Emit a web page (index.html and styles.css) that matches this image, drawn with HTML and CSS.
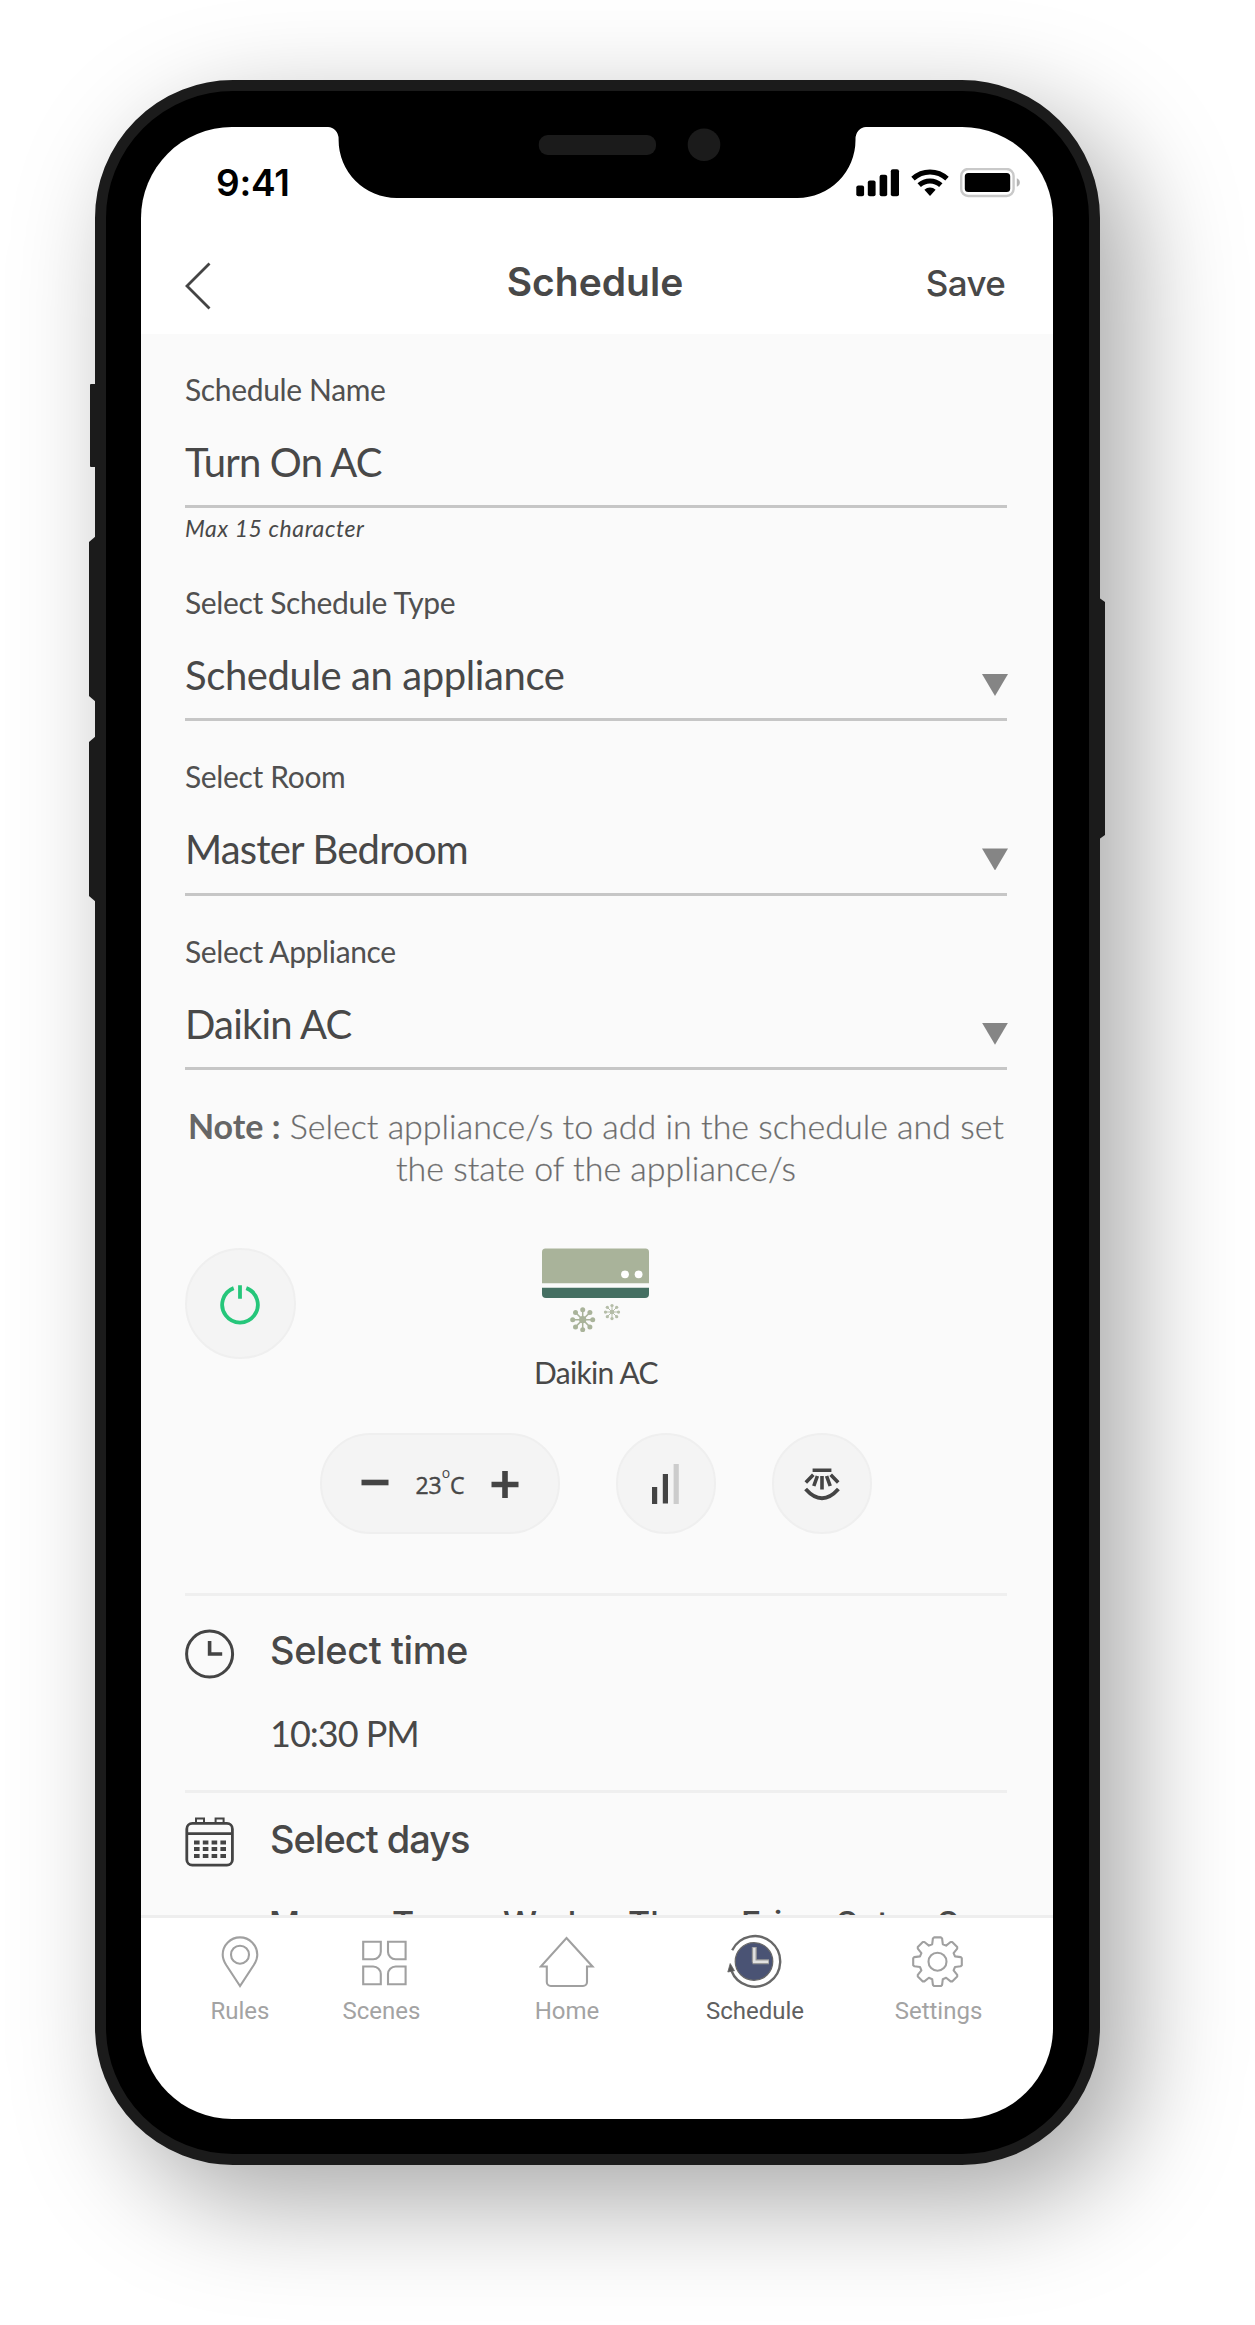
FILE: index.html
```html
<!DOCTYPE html>
<html lang="en">
<head>
<meta charset="utf-8">
<title>Schedule</title>
<link rel="stylesheet" href="styles.css">
</head>
<body>
<div class="phone">
  <span class="side-button side-button--mute"></span>
  <span class="side-button side-button--up"></span>
  <span class="side-button side-button--down"></span>
  <span class="side-button side-button--power"></span>

  <div class="screen">
    <svg class="notch" width="538" height="71" viewBox="0 0 538 71">
      <path d="M0 0A10.6 12 0 0 1 10.6 12V13A58 58 0 0 0 68.6 71H469.5A58 58 0 0 0 527.5 13V12A10.6 12 0 0 1 538 0Z" fill="#000"/>
      <rect x="210.8" y="8" width="117.2" height="20" rx="9" fill="#1b1b1b"/>
      <circle cx="376" cy="17.7" r="16.3" fill="#1b1b1b"/>
    </svg>

    <div class="status">
      <span class="status-time">9:41</span>
      <svg width="164" height="30" viewBox="0 0 164 30">
        <rect x="0.3" y="17.5" width="7.8" height="10.8" rx="2"/>
        <rect x="11.8" y="12.5" width="7.8" height="15.8" rx="2"/>
        <rect x="23.6" y="6.8" width="7.6" height="21.5" rx="2"/>
        <rect x="34.8" y="1.3" width="8.2" height="27" rx="2"/>
        <g fill="none" stroke="#000" stroke-width="5">
          <path d="M57 10.6a25 25 0 0 1 34 0"/>
          <path d="M63.2 17.2a16 16 0 0 1 21.6 0"/>
        </g>
        <path d="M74 28l-5.6-6.3a8.4 8.4 0 0 1 11.2 0z"/>
        <rect x="105.2" y="1" width="52.4" height="27" rx="7" fill="none" stroke="#c9c9c9" stroke-width="2.4"/>
        <rect x="108.8" y="5" width="45.4" height="19" rx="3.5"/>
        <path d="M160.8 10.3q3 1.2 3 4.2t-3 4.2z" fill="#b5b5b5"/>
      </svg>
    </div>

    <header class="nav">
      <svg class="nav-back" width="26" height="48" viewBox="0 0 26 48"><path d="M24.5 1.5 2 24 24.5 46.5" fill="none" stroke="#444" stroke-width="2.8"/></svg>
      <h1 class="nav-title">Schedule</h1>
      <span class="nav-save">Save</span>
    </header>

    <main class="content">
      <section class="field">
        <span class="label">Schedule Name</span>
        <div class="value">Turn On AC</div>
      </section>
      <p class="hint">Max 15 character</p>

      <section class="field">
        <span class="label">Select Schedule Type</span>
        <div class="value value--long">Schedule an appliance<i class="caret"></i></div>
      </section>
      <section class="field">
        <span class="label">Select Room</span>
        <div class="value">Master Bedroom<i class="caret"></i></div>
      </section>
      <section class="field">
        <span class="label">Select Appliance</span>
        <div class="value">Daikin AC<i class="caret"></i></div>
      </section>

      <p class="note"><b>Note :</b> Select appliance/s to add in the schedule and set the state of the appliance/s</p>

      <section class="device">
        <div class="round round--power">
          <svg width="42" height="42" viewBox="0 0 42 42" fill="none" stroke="#25c67a" stroke-width="3.8"><path d="M14.7 5.1a17.8 17.8 0 1 0 12.6 0M21 2.2v13.6"/></svg>
        </div>
        <div class="device-body">
          <svg width="107" height="84" viewBox="0 0 107 84">
            <path d="M0 35.2V4a3.5 3.5 0 0 1 3.5-3.5h100A3.5 3.5 0 0 1 107 4v31.2z" fill="#a9b39a"/>
            <path d="M0 39.8h107V46a4 4 0 0 1-4 4H4a4 4 0 0 1-4-4z" fill="#456f62"/>
            <circle cx="83" cy="26.3" r="3.9" fill="#fff"/><circle cx="96.6" cy="26.3" r="3.9" fill="#fff"/>
            <defs>
              <g id="flake">
                <circle r="3.6"/>
                <path d="M0-10V10M-10 0H10M-7.2-7.2 7.2 7.2M-7.2 7.2 7.2-7.2" stroke="#a9b39a" stroke-width="1.5"/>
                <circle cy="-10" r="2.5"/><circle cy="10" r="2.5"/><circle cx="-10" r="2.5"/><circle cx="10" r="2.5"/>
                <circle cx="-7.2" cy="-7.2" r="2.5"/><circle cx="7.2" cy="7.2" r="2.5"/><circle cx="-7.2" cy="7.2" r="2.5"/><circle cx="7.2" cy="-7.2" r="2.5"/>
              </g>
            </defs>
            <g fill="#a9b39a">
              <use href="#flake" transform="translate(40.7 71.7)"/>
              <use href="#flake" transform="translate(70 64) scale(.65)" opacity=".85"/>
            </g>
          </svg>
          <span class="device-name">Daikin AC</span>
        </div>
      </section>

      <section class="controls">
        <div class="temp">
          <svg width="28" height="28" viewBox="0 0 28 28"><path d="M.5 12.5h27" stroke="#444" stroke-width="5.6"/></svg>
          <span class="temp-value">23<sup>o</sup>C</span>
          <svg width="28" height="28" viewBox="0 0 28 28"><path d="M.5 14.5h27M14 1v27" stroke="#444" stroke-width="5.6"/></svg>
        </div>
        <div class="round">
          <svg class="fan" width="30" height="42" viewBox="0 0 30 42" stroke-width="5.2"><path d="M4.6 24v17M15.4 11v29.5" stroke="#444"/><path d="M26.2 1v40" stroke="#ccc"/></svg>
        </div>
        <div class="round">
          <svg width="36" height="34" viewBox="0 0 36 34" fill="none" stroke="#444" stroke-width="3.6"><path d="M8.6 3.3h18.8M9.3 7.8 1.8 15.6M13.4 9l-3.6 10M18 9v13.5M22.6 9l3.6 10M26.7 7.8l7.5 7.8"/><path d="M1.6 22q16.4 18.5 32.8 0" stroke-width="3.8"/></svg>
        </div>
      </section>

      <section class="row">
        <svg class="row-icon row-icon--time" width="50" height="50" viewBox="0 0 50 50" fill="none" stroke="#444"><circle cx="24.6" cy="25" r="23" stroke-width="3"/><path d="M24.6 12v13h12.6" stroke-width="3.6"/></svg>
        <div>
          <h2 class="row-title">Select time</h2>
          <div class="row-value">10:30 PM</div>
        </div>
      </section>

      <section class="row row--days">
        <svg class="row-icon" width="50" height="50" viewBox="0 0 50 50" fill="none" stroke="#444" stroke-width="2.8">
          <rect x="1.8" y="6.4" width="45.6" height="41.8" rx="5.5"/>
          <path d="M2 16.6h45.4"/>
          <path d="M11 6V1.4h8V6M30.6 6V1.4h8V6" stroke-width="2"/>
          <path d="M9 25.4h32M9 32h32M9 39h32" stroke-width="4" stroke-dasharray="5.6 3.2"/>
        </svg>
        <div>
          <h2 class="row-title">Select days</h2>
          <div class="days"><span>Mon ,</span><span>Tue ,</span><span>Wed ,</span><span>Thu ,</span><span>Fri ,</span><span>Sat ,</span><span>Sun</span></div>
        </div>
      </section>
    </main>

    <nav class="tabs">
      <div class="tab">
        <svg width="56" height="56" viewBox="0 0 56 56"><path d="M28 53 14.2 32C11.7 28 10.7 25 10.7 21.7a17.3 17.3 0 0 1 34.6 0c0 3.3-1 6.3-3.5 10.3z"/><circle cx="28" cy="21.7" r="9"/></svg>
        <span>Rules</span>
      </div>
      <div class="tab">
        <svg width="56" height="56" viewBox="0 0 56 56"><path d="M9.2 8.7h17.6v10a7.6 7.6 0 0 1-7.6 7.6h-10zM34 8.7h17.6v17.6h-10a7.6 7.6 0 0 1-7.6-7.6zM9.2 33.5h10a7.6 7.6 0 0 1 7.6 7.6v10.1H9.2zM51.6 51.2H34V41.1a7.6 7.6 0 0 1 7.6-7.6h10z"/></svg>
        <span>Scenes</span>
      </div>
      <div class="tab">
        <svg width="56" height="56" viewBox="0 0 56 56"><path d="M27.5 5 53.5 33.5H48V49a4 4 0 0 1-4 4H11.8a4 4 0 0 1-4-4V33.5H1.8z"/></svg>
        <span>Home</span>
      </div>
      <div class="tab tab--active">
        <svg width="56" height="56" viewBox="0 0 56 56">
          <circle cx="27" cy="28.5" r="18.8" fill="#4a5374" stroke-width="1.2"/>
          <path d="M27.3 14v15.5M25.5 28.7H42" stroke="#9a9a9a" stroke-width="5"/>
          <path d="M27.3 14.8v14M26 28.7h15.3" stroke="#e2e2e2" stroke-width="2.4"/>
          <path d="M5.2 17.2A25.3 25.3 0 1 1 4.3 37.5" stroke-width="2.4"/>
          <path d="M3.2 30.5.8 39l6.7-1.2z" fill="#555" stroke-width=".8"/>
        </svg>
        <span>Schedule</span>
      </div>
      <div class="tab">
        <svg width="56" height="56" viewBox="0 0 56 56"><g transform="translate(26.5 28.7)" stroke-linejoin="round"><path d="M-5.3-17.5-4.6-23.2-3.5-24.3H3.5L4.6-23.2 5.3-17.5 8.6-16.1 13.1-19.7 14.7-19.7 19.7-14.7 19.7-13.1 16.1-8.6 17.5-5.3 23.2-4.6 24.3-3.5V3.5L23.2 4.6 17.5 5.3 16.1 8.6 19.7 13.1 19.7 14.7 14.7 19.7 13.1 19.7 8.6 16.1 5.3 17.5 4.6 23.2 3.5 24.3H-3.5L-4.6 23.2-5.3 17.5-8.6 16.1-13.1 19.7-14.7 19.7-19.7 14.7-19.7 13.1-16.1 8.6-17.5 5.3-23.2 4.6-24.3 3.5V-3.5L-23.2-4.6-17.5-5.3-16.1-8.6-19.7-13.1-19.7-14.7-14.7-19.7-13.1-19.7-8.6-16.1z"/><circle r="9"/></g></svg>
        <span>Settings</span>
      </div>
    </nav>
  </div>
</div>
</body>
</html>
```
FILE: styles.css
```css
* { box-sizing: border-box; }

body {
  margin: 0;
  padding: 80px 0 0 95px;
  height: 2325px;
  overflow: hidden;
  background: #fff;
  color: #484848;
  font-family: Lato, "Liberation Sans", sans-serif;
}

h1, h2, p { margin: 0; font-weight: inherit; }

/* Phone shell */
.phone {
  position: relative;
  width: 1005px;
  height: 2085px;
  padding: 36px 36px 35px 35px;
  border: 11px solid #1b1b1b;
  border-radius: 138px;
  background: #000;
  box-shadow: 30px 36px 108px rgba(0, 0, 0, .35);
}

.side-button {
  position: absolute;
  left: -17px;
  width: 7px;
  background: #1b1b1b;
}
.side-button--mute { top: 293px; height: 83px; left: -16px; border-radius: 1px; }
.side-button--up { top: 445px; height: 166px; clip-path: polygon(100% 0, 0 6px, 0 160px, 100% 100%); }
.side-button--down { top: 645px; height: 166px; clip-path: polygon(100% 0, 0 6px, 0 160px, 100% 100%); }
.side-button--power { top: 506px; height: 243px; left: auto; right: -16px; clip-path: polygon(0 0, 100% 5px, 100% 238px, 0 100%); }

.screen {
  position: relative;
  display: flex;
  flex-direction: column;
  height: 1992px;
  border-radius: 91px;
  overflow: hidden;
  background: #fff;
}
.notch { position: absolute; top: 0; left: 187px; }

/* Status bar and title bar */
.status {
  display: flex;
  justify-content: space-between;
  align-items: center;
  height: 112px;
  padding: 0 33px 0 75px;
}
.status-time {
  color: #000;
  font: 600 37px/44px Inter, sans-serif;
  letter-spacing: -.2px;
}

.nav {
  display: grid;
  grid-template-columns: 1fr auto 1fr;
  align-items: center;
  height: 95px;
  padding: 0 48px 11px 44px;
}
.nav-back { margin-top: 9px; }
.nav-title { margin-top: 2px; font: 600 39px/48px Inter, sans-serif; letter-spacing: 0; }
.nav-save { justify-self: end; margin-top: 4px; font: 500 35px/44px Inter, sans-serif; letter-spacing: -.7px; }

/* Form */
.content {
  flex: 1;
  min-height: 0;
  overflow: hidden;
  padding: 35px 46px 0 44px;
  background: #fafafa;
}
.field + .field { margin-top: 35px; }
.label {
  display: block;
  margin-bottom: 29px;
  color: #505050;
  font-size: 30px;
  line-height: 40px;
  letter-spacing: -.35px;
}
.value {
  display: flex;
  justify-content: space-between;
  align-items: flex-end;
  padding-bottom: 19.4px;
  border-bottom: 3px solid #c6c6c6;
  font-size: 40px;
  line-height: 48px;
  letter-spacing: -.8px;
}
.value--long { letter-spacing: -.4px; }
.caret {
  width: 26px;
  height: 22px;
  margin: 0 -1px 3px 0;
  background: #858585;
  clip-path: polygon(0 0, 100% 0, 50% 100%);
}
.hint {
  margin: 6px 0 38.6px;
  font-size: 23px;
  line-height: 29px;
  font-style: italic;
  letter-spacing: .6px;
}
.note {
  margin-top: 35px;
  color: #666;
  font-size: 34px;
  line-height: 42px;
  font-weight: 300;
  text-align: center;
  -webkit-text-stroke: .3px #888;
}
.note b { color: #666; font-weight: 700; -webkit-text-stroke: 0; }

/* Appliance state */
.device {
  display: grid;
  grid-template-columns: 1fr auto 1fr;
  margin-top: 59px;
}
.device-body { display: flex; flex-direction: column; align-items: center; gap: 20px; }
.device-name { font-size: 30px; line-height: 40px; letter-spacing: -.7px; }

.controls { display: flex; justify-content: center; gap: 56px; margin-top: 41px; }
.round, .temp {
  display: flex;
  align-items: center;
  justify-content: center;
  height: 101px;
  border: 2px solid #efefef;
  border-radius: 56px;
  background: #f4f4f4;
}
.round { width: 100px; }
.round--power { width: 111px; height: 111px; padding-right: 2px; }
.fan { margin-right: 3px; }
.temp { width: 240px; gap: 26px; }
.temp-value {
  display: flex;
  align-items: center;
  padding-top: 2px;
  font: 400 23px/32px "Open Sans", sans-serif;
  -webkit-text-stroke: .4px #444;
}
.temp-value sup { align-self: flex-start; margin: -6px 0 0; font-size: 14px; line-height: 20px; -webkit-text-stroke: 0; }

/* Time and days */
.row {
  display: grid;
  grid-template-columns: 50px 1fr;
  column-gap: 35px;
  margin-top: 59px;
  padding: 29px 0 35px;
  border-top: 3px solid #efefef;
}
.row--days { margin-top: 0; padding-top: 21px; }
.row-icon { margin-top: 3px; }
.row-icon--time { margin-top: 4px; }
.row-title { padding-top: 3px; font: 500 38px/45px Inter, sans-serif; letter-spacing: -.4px; }
.row--days .row-title { letter-spacing: -1px; }
.row-value { padding-top: 1px; margin-top: 38px; font-size: 36px; line-height: 43px; letter-spacing: -1px; }
.days {
  display: grid;
  grid-template-columns: 123px 111px 125px 113px 95px 101px 1fr;
  margin: 40px 0 0 -1px;
  font: 500 34px/44px Inter, sans-serif;
}

/* Tab bar */
.tabs {
  display: grid;
  grid-template-columns: 118px 165px 206px 170px 197px;
  height: 204px;
  padding: 15px 0 0 40px;
  border-top: 3px solid #eee;
}
.tab {
  display: flex;
  flex-direction: column;
  align-items: center;
  gap: 7px;
  color: #a3a3a3;
  font: 400 24px/30px Roboto, sans-serif;
}
.tab svg { fill: none; stroke: #a0a0a0; stroke-width: 2.1; }
.tab--active { color: #606060; }
.tab--active svg { stroke: #686868; }
```
